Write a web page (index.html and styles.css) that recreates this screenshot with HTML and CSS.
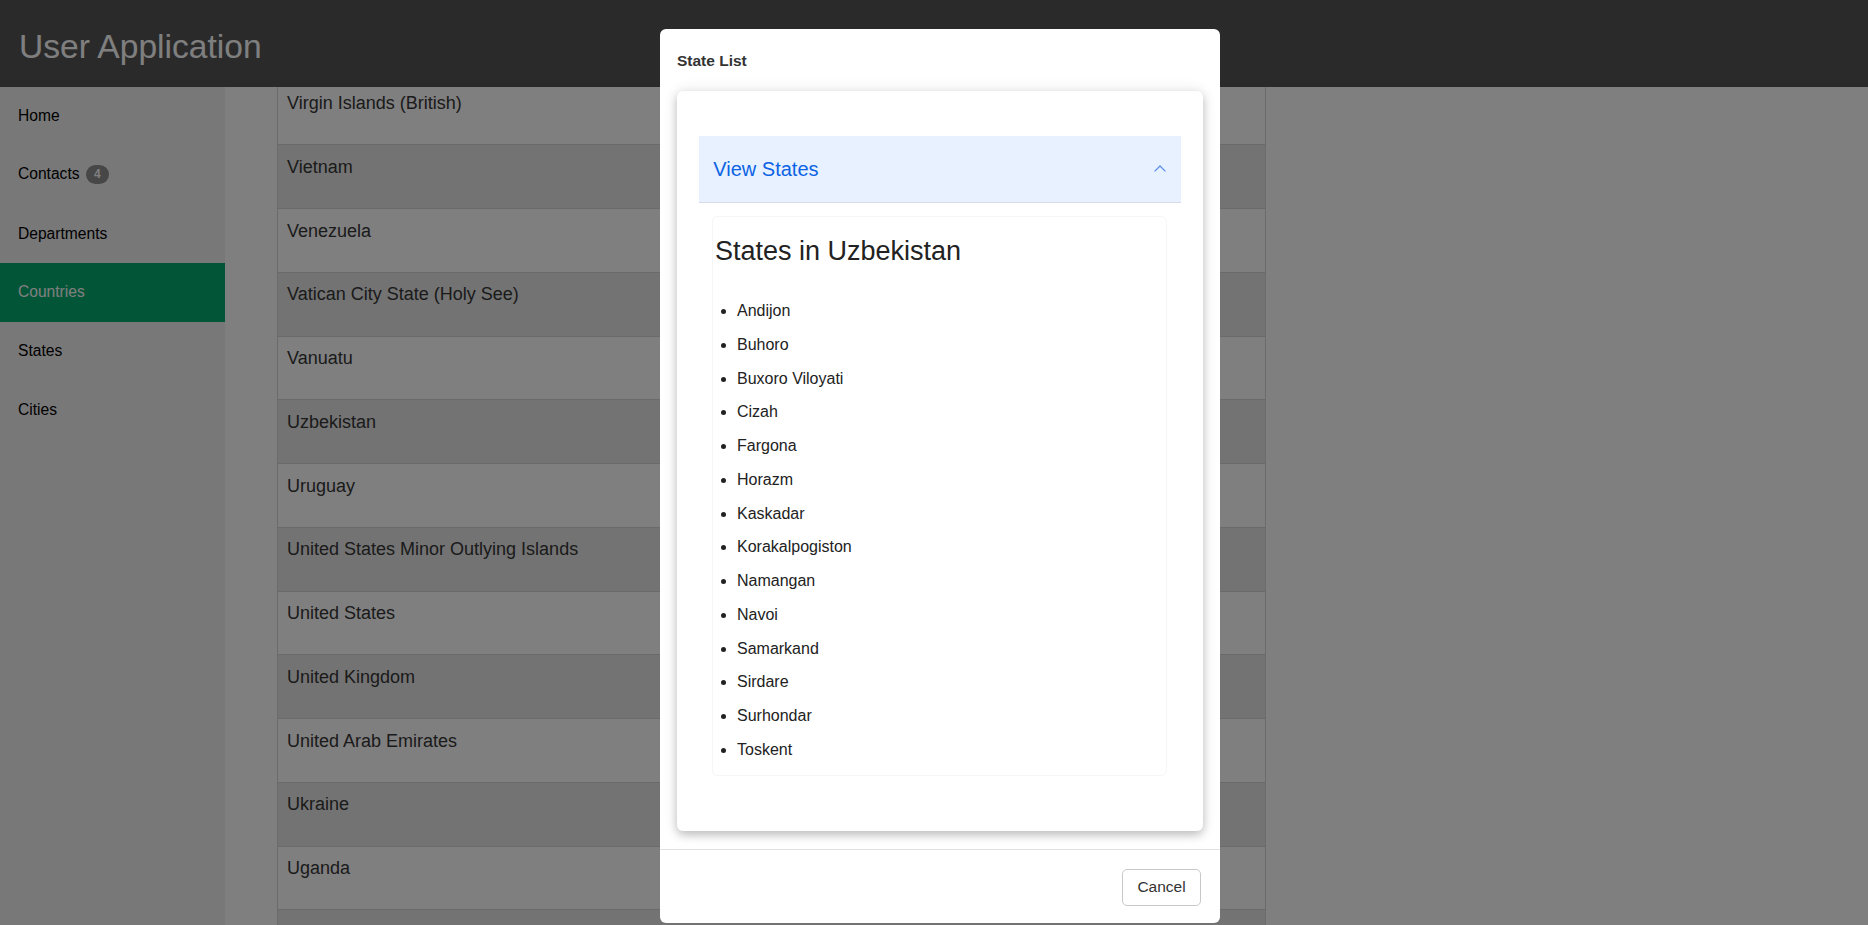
FILE: index.html
```html
<!DOCTYPE html>
<html lang="en">
<head>
<meta charset="utf-8">
<title>User Application</title>
<link rel="stylesheet" href="styles.css">
</head>
<body>
<header class="topbar">
  <h1 class="brand">User Application</h1>
</header>
<div class="layout">
  <nav class="sidebar">
    <a class="nav-link" href="#">Home</a>
    <a class="nav-link" href="#">Contacts <span class="badge">4</span></a>
    <a class="nav-link" href="#">Departments</a>
    <a class="nav-link active" href="#">Countries</a>
    <a class="nav-link" href="#">States</a>
    <a class="nav-link" href="#">Cities</a>
  </nav>
  <main class="content">
    <div class="country-list">
      <div class="country-row">Virgin Islands (British)</div>
      <div class="country-row">Vietnam</div>
      <div class="country-row">Venezuela</div>
      <div class="country-row">Vatican City State (Holy See)</div>
      <div class="country-row">Vanuatu</div>
      <div class="country-row">Uzbekistan</div>
      <div class="country-row">Uruguay</div>
      <div class="country-row">United States Minor Outlying Islands</div>
      <div class="country-row">United States</div>
      <div class="country-row">United Kingdom</div>
      <div class="country-row">United Arab Emirates</div>
      <div class="country-row">Ukraine</div>
      <div class="country-row">Uganda</div>
      <div class="country-row"></div>
    </div>
  </main>
</div>

<div class="backdrop"></div>

<div class="modal-layer">
  <div class="modal">
    <div class="modal-header">
      <h2 class="modal-title">State List</h2>
    </div>
    <div class="modal-body">
      <div class="card">
        <div class="accordion">
          <button class="accordion-button" type="button">
            <span>View States</span>
            <svg class="chevron" width="12" height="7" viewBox="0 0 12 7"><polyline points="0.6,6.4 6,1 11.4,6.4" fill="none" stroke="#5b8fe9" stroke-width="1.3"/></svg>
          </button>
          <div class="accordion-body">
            <div class="state-box">
              <h3 class="state-heading">States in Uzbekistan</h3>
              <ul class="state-list">
                <li>Andijon</li>
                <li>Buhoro</li>
                <li>Buxoro Viloyati</li>
                <li>Cizah</li>
                <li>Fargona</li>
                <li>Horazm</li>
                <li>Kaskadar</li>
                <li>Korakalpogiston</li>
                <li>Namangan</li>
                <li>Navoi</li>
                <li>Samarkand</li>
                <li>Sirdare</li>
                <li>Surhondar</li>
                <li>Toskent</li>
              </ul>
            </div>
          </div>
        </div>
      </div>
    </div>
    <div class="modal-footer">
      <button class="btn-cancel" type="button">Cancel</button>
    </div>
  </div>
</div>
</body>
</html>
```

FILE: styles.css
```css
* {
  box-sizing: border-box;
}

html, body {
  margin: 0;
  height: 100%;
}

body {
  font-family: "Liberation Sans", Arial, sans-serif;
  background: #ffffff;
  color: #222;
  overflow: hidden;
}

/* ---------- header ---------- */
.topbar {
  height: 87px;
  background: #545454;
  padding: 28px 19px 0;
  position: relative;
  z-index: 2;
}

.brand {
  margin: 0;
  font-weight: normal;
  font-size: 33.6px;
  line-height: 38px;
  color: #ffffff;
}

/* ---------- layout ---------- */
.layout {
  display: flex;
  height: calc(100% - 87px);
}

.sidebar {
  width: 225px;
  flex: none;
  background: #f1f1f1;
  display: flex;
  flex-direction: column;
}

.nav-link {
  display: block;
  padding: 20.3px 18px;
  font-size: 15.6px;
  line-height: 18px;
  color: #000;
  text-decoration: none;
}

.nav-link:first-child {
  padding-top: 19.6px;
}

.nav-link.active {
  background: #04aa6d;
  color: #ffffff;
}

.badge {
  display: inline-block;
  vertical-align: 1px;
  margin-left: 2px;
  width: 22.7px;
  height: 19px;
  border-radius: 10px;
  background: #8e8e8e;
  color: #ffffff;
  font-size: 12px;
  font-weight: bold;
  line-height: 19px;
  text-align: center;
}

.content {
  flex: 1;
  padding-left: 52px;
  overflow: hidden;
}

.country-list {
  width: 989px;
  margin-top: -5.4px;
  border-left: 1px solid #d6d6d6;
  border-right: 1px solid #d6d6d6;
}

.country-row {
  height: 63.75px;
  padding: 8.5px 9px 0;
  font-size: 18px;
  line-height: 27px;
  color: #363636;
  border-bottom: 1px solid #d4d4d4;
  background: #ffffff;
}

.country-row:nth-child(even) {
  background: #e6e6e6;
}

/* ---------- modal ---------- */
.backdrop {
  position: fixed;
  inset: 0;
  background: rgba(0, 0, 0, 0.5);
  z-index: 10;
}

.modal-layer {
  position: fixed;
  inset: 0;
  z-index: 20;
  display: flex;
  justify-content: center;
  align-items: flex-start;
  padding: 29px 0 0 12px;
}

.modal {
  width: 560px;
  background: #ffffff;
  border-radius: 6px;
}

.modal-header {
  padding: 20px 17px 0;
}

.modal-title {
  margin: 0;
  font-size: 15.5px;
  line-height: 23px;
  font-weight: bold;
  color: #333;
}

.modal-body {
  padding: 19px 17.3px 17.6px 16.7px;
}

.card {
  background: #ffffff;
  border-radius: 6px;
  padding: 45px 21.7px 22px 22.3px;
  box-shadow: 0 4px 10px rgba(0, 0, 0, 0.22), 0 0 16px rgba(0, 0, 0, 0.09);
}

.accordion-button {
  display: flex;
  align-items: center;
  justify-content: space-between;
  width: 100%;
  height: 66.7px;
  padding: 0 15px 0 14.3px;
  border: 0;
  border-bottom: 1px solid #d5dce7;
  background: #e7f1ff;
  color: #0c63e4;
  font-family: "Liberation Sans", Arial, sans-serif;
  font-size: 20px;
  line-height: 30px;
  text-align: left;
}

.chevron {
  display: block;
  flex: none;
}

.accordion-body {
  padding: 13.7px 14px 33.7px 13px;
}

.state-box {
  border: 1px solid #f6f6f6;
  border-radius: 6px;
  padding: 17.3px 3px 3px 2px;
}

.state-heading {
  margin: 0 0 32px;
  font-size: 27px;
  line-height: 32.4px;
  font-weight: normal;
  color: #222;
}

.state-list {
  margin: 0;
  padding-left: 22px;
  font-size: 16px;
  line-height: 24px;
  color: #222;
}

.state-list li {
  margin-bottom: 9.75px;
}

.modal-footer {
  border-top: 1px solid #e2e2e2;
  padding: 19px 19.3px 17.4px;
  display: flex;
  justify-content: flex-end;
}

.btn-cancel {
  width: 78.4px;
  height: 37px;
  padding: 0;
  background: #ffffff;
  border: 1px solid #c9c9c9;
  border-radius: 5px;
  font-family: "Liberation Sans", Arial, sans-serif;
  font-size: 15.5px;
  color: #333;
}
```
